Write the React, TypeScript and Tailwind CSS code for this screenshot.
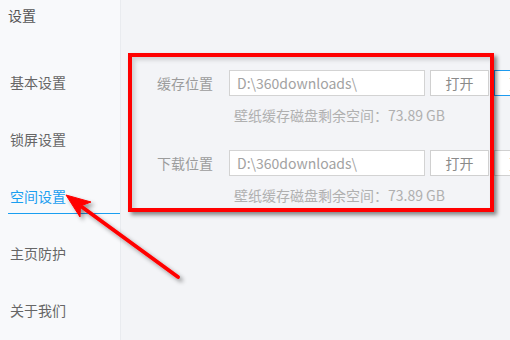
import React from 'react';

const MENU = [
  { label: '基本设置' },
  { label: '锁屏设置' },
  { label: '空间设置', active: true },
  { label: '主页防护' },
  { label: '关于我们' },
];

const FONT = { fontFamily: '"Noto Sans CJK SC", "Noto Sans", sans-serif' };

function PathRow({ label, highlight }: { label: string; highlight?: boolean }) {
  return (
    <div className="flex h-[26px] items-center">
      <span className="w-[56px] shrink-0 whitespace-nowrap text-[14px] leading-5 text-[#9c9c9c]">{label}</span>
      <div className="ml-4 flex h-[26px] w-[196px] shrink-0 items-center border border-[#d3d3d3] bg-white pl-[7px] text-[14px] text-[#a2a2a2]">
        D:\360downloads\
      </div>
      <button className="ml-[5px] h-[26px] w-[59px] shrink-0 border border-[#d0d0d0] bg-white text-[14px] text-[#8a8a8a]">
        打开
      </button>
      <button
        className={`ml-[5px] h-[26px] w-[58px] shrink-0 border bg-white text-[14px] text-[#8a8a8a] ${
          highlight ? 'border-[#1e9bef]' : 'border-[#d0d0d0]'
        }`}
      >
        更改
      </button>
    </div>
  );
}

function Hint() {
  return (
    <div className="mt-[10px] pl-[77px] text-[14px] leading-[18px] whitespace-nowrap text-[#b0b0b0]">
      壁纸缓存磁盘剩余空间：73.89 GB
    </div>
  );
}

export default function App() {
  return (
    <div className="relative flex h-[340px] w-[510px] overflow-hidden bg-[#f3f4f7]" style={FONT}>
      {/* Sidebar */}
      <div className="flex w-[121px] shrink-0 flex-col border-r border-[#e9ebef] bg-[#f8f9fb] pt-[5px]">
        <div className="ml-2 h-5 text-[14px] leading-5 text-[#555]">设置</div>
        <div className="mt-[47px] flex flex-col">
          {MENU.map((m) => (
            <div key={m.label} className="ml-2 h-[57px]">
              <div
                className={`border-b pb-[7px] pl-[2px] text-[14px] leading-5 ${
                  m.active ? 'border-[#1a9ef0] text-[#1a9ef0]' : 'border-transparent text-[#666]'
                }`}
              >
                {m.label}
              </div>
            </div>
          ))}
        </div>
      </div>

      {/* Content */}
      <div className="flex min-w-0 flex-1 flex-col pl-[36px] pt-[70px]">
        <PathRow label="缓存位置" highlight />
        <Hint />
        <div className="mt-[26px]">
          <PathRow label="下载位置" />
        </div>
        <Hint />
      </div>

      {/* annotation box */}
      <div className="pointer-events-none absolute left-[128px] top-[53px] h-[159px] w-[366px] border-4 border-[#ff0000] shadow-[3px_3px_4px_rgba(0,0,0,0.45),inset_3px_3px_4px_rgba(0,0,0,0.15)]" />

      {/* annotation arrow */}
      <svg className="pointer-events-none absolute left-0 top-0" width="510" height="340">
        <defs>
          <filter id="sh" x="-20%" y="-20%" width="140%" height="140%">
            <feDropShadow dx="3" dy="3" stdDeviation="2" floodColor="#000" floodOpacity="0.4" />
          </filter>
        </defs>
        <g filter="url(#sh)" fill="#ff0000" stroke="#ff0000">
          <line x1="178" y1="277" x2="82" y2="207" strokeWidth="4" strokeLinecap="round" />
          <polygon points="66,195 91,202 80.5,206 80,217" strokeWidth="1" strokeLinejoin="round" />
        </g>
      </svg>
    </div>
  );
}
